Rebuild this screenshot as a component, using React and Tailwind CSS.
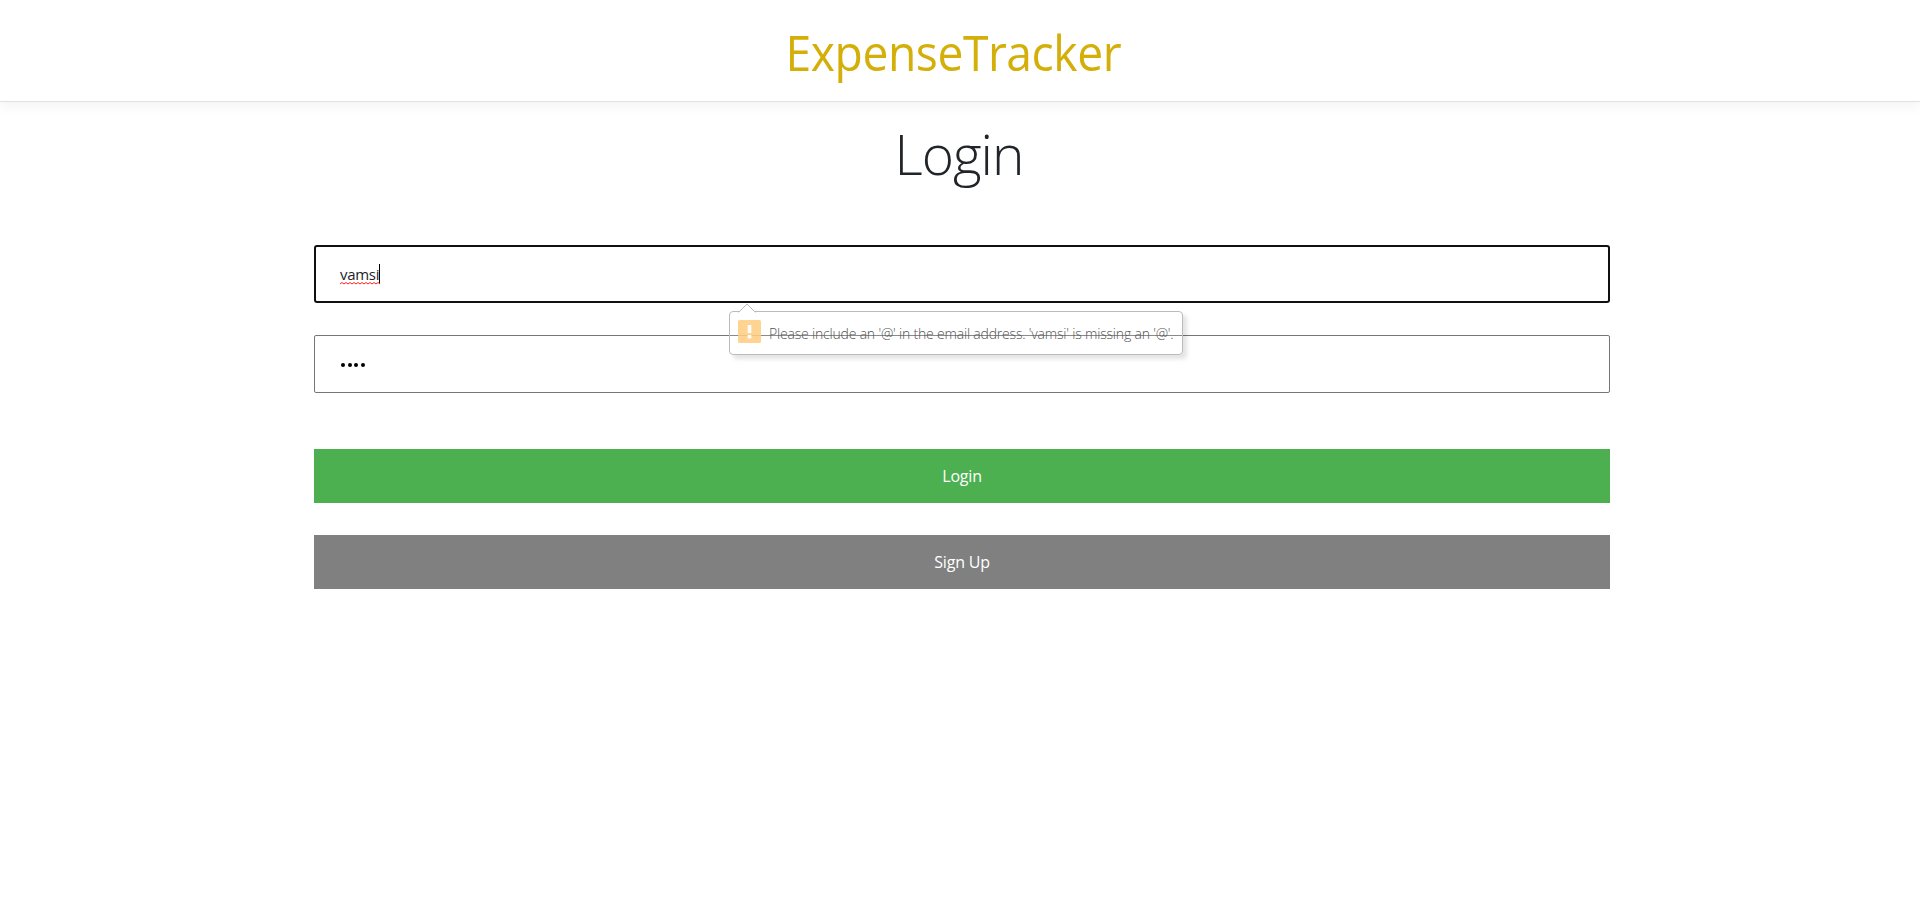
function ValidationBubble() {
  return (
    <div className="absolute left-[415px] top-[66px] z-10 flex h-[44px] w-[454px] items-center rounded-[4px] border border-[#bbbbbb] bg-white/15 pl-2 shadow-[4px_4px_4px_rgba(0,0,0,0.11)]">
      <svg className="absolute left-[7px] top-[-9px]" width="20" height="10" viewBox="0 0 20 10" fill="none">
        <path d="M1.5 9.5 L10 1 L18.500 9.500" fill="#fff" stroke="#bbbbbb" />
      </svg>
      <svg className="mb-[3px]" width="23" height="23" viewBox="0 0 23 23">
        <rect width="23" height="23" rx="1.500" fill="#ffcc80" fillOpacity="0.85" />
        <rect x="9.700" y="5" width="3.600" height="8" fill="#fff" />
        <rect x="9.700" y="15" width="3.600" height="3.400" fill="#fff" />
      </svg>
      <span className="ml-[8px] mt-px whitespace-nowrap text-[14px] font-light leading-none tracking-[-0.19px] text-[#555555]">
        Please include an '@' in the email address. 'vamsi' is missing an '@'.
      </span>
    </div>
  );
}

export default function App() {
  return (
    <div className="min-h-[916px] bg-white font-['Open_Sans','Noto_Sans',sans-serif] text-[#212529]">
      <header className="flex h-[102px] justify-center border-b border-[#dee2e6] pr-[13px] pt-[17px] shadow-[0_4px_12px_rgba(0,0,0,0.05)]">
        <h1 className="scale-x-[0.925] whitespace-nowrap text-[50px] font-normal leading-[70px] tracking-[-0.5px] text-[#d4af0a]">ExpenseTracker</h1>
      </header>
      <main className="flex flex-col items-center pl-1">
        <h2 className="mr-1.5 mt-[17px] h-[126px] text-[55px] font-light leading-[70px] tracking-[-1px]">Login</h2>
        <form className="relative flex w-[1296px] flex-col text-[16px]">
          <div className="flex h-[58px] items-center rounded-[3px] border-2 border-[#101010] pl-[24px]">
            <div className="relative flex h-[20px] items-center border-r border-black">
              <span className="text-[15px] leading-none tracking-[-0.3px]">vamsi</span>
              <svg className="absolute left-0 top-[18px]" width="40" height="3" viewBox="0 0 40 3" fill="none">
                <path d="M0 2 L2 .5 L4 2 L6 .5 L8 2 L10 .5 L12 2 L14 .5 L16 2 L18 .5 L20 2 L22 .5 L24 2 L26 .5 L28 2 L30 .5 L32 2 L34 .5 L36 2 L38 .5 L40 2" stroke="#ff2020" />
              </svg>
            </div>
          </div>
          <div className="mt-8 flex h-[58px] items-center gap-[2.500px] rounded-[2px] border border-[#767676] pl-[26px] pt-[2px]">
            <i className="size-1 rounded-full bg-black" />
            <i className="size-1 rounded-full bg-black" />
            <i className="size-1 rounded-full bg-black" />
            <i className="size-1 rounded-full bg-black" />
          </div>
          <ValidationBubble />
          <button type="button" className="mt-14 h-[54px] bg-[#4caf50] tracking-[-0.2px] text-white">Login</button>
          <button type="button" className="mt-8 h-[54px] bg-[#808080] tracking-[-0.2px] text-white">Sign Up</button>
        </form>
      </main>
    </div>
  );
}
